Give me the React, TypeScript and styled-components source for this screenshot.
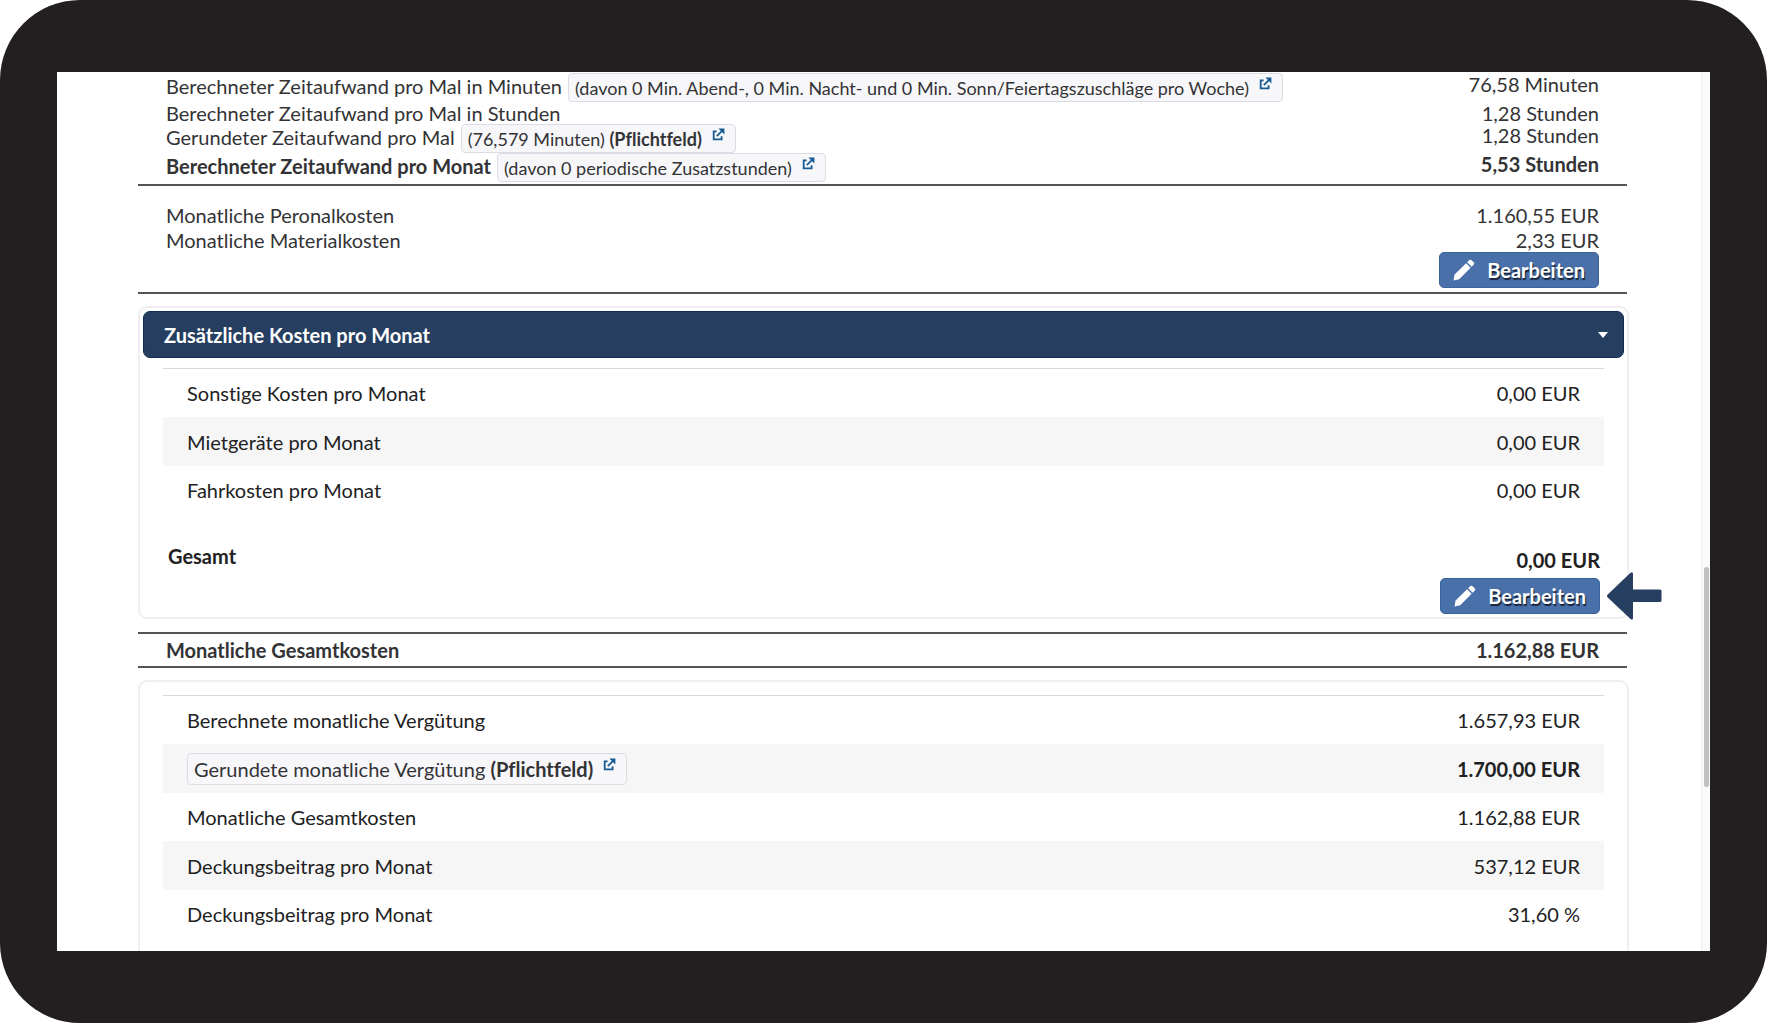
import React from "react";
import styled, { createGlobalStyle, css } from "styled-components";

const GlobalStyle = createGlobalStyle`
  *, *::before, *::after { box-sizing: border-box; }
  html, body, #root { height: 100%; }
  body { margin: 0; background: #ffffff; }
`;

const Device = styled.main`
  display: flex;
  height: 100%;
  padding: 72px 57px;
  border-radius: 80px;
  background: #231f20;
  font-family: Lato, "Noto Sans", sans-serif;
  font-size: 20px;
  font-variant-ligatures: none;
  line-height: 22px;
  color: #333335;
`;

const Screen = styled.div`
  flex: 1;
  display: flex;
  min-width: 0;
  overflow: hidden;
  background: #ffffff;
`;

const Content = styled.div`
  flex: 1;
  min-width: 0;
  padding: 1px 72px 0 81px;
`;

const ScrollTrack = styled.div`
  flex: none;
  width: 9px;
  padding: 0 1px 0 2px;
  border-left: 1px solid #eeeeee;
  background: #fafafa;
`;

const ScrollThumb = styled.div`
  height: 25%;
  margin-top: 495px;
  border-radius: 4px;
  background: #c1c1c1;
`;

const Section = styled.section<{ $top: number; $bottom: number; $ruled?: boolean }>`
  margin-right: 2px;
  padding: ${(p) => p.$top}px 28px ${(p) => p.$bottom}px;
  border-bottom: 2px solid #555557;
  ${(p) => p.$ruled && css`border-top: 2px solid #555557;`}
`;

const rowHeights = { compact: 22, normal: 25, noted: 29 };

const Label = styled.div`
  display: flex;
  align-items: flex-start;
  gap: 6px;
  white-space: nowrap;
`;

const Row = styled.div<{ $bold?: boolean; $size?: keyof typeof rowHeights }>`
  display: flex;
  justify-content: space-between;
  align-items: center;
  height: ${(p) => rowHeights[p.$size ?? "normal"]}px;
  font-weight: ${(p) => (p.$bold ? 700 : 400)};
  ${(p) =>
    p.$size === "noted" &&
    css`
      align-items: flex-start;
      ${Label} { line-height: 26px; }
    `}
`;

const Chip = styled.span<{ $large?: boolean }>`
  display: inline-flex;
  align-items: center;
  gap: 5px;
  height: ${(p) => (p.$large ? 32 : 29)}px;
  padding: 0 10px 0 6px;
  border: 1px solid #dcdce6;
  border-radius: 4px;
  background: #f7f7fa;
  font-size: ${(p) => (p.$large ? 20 : 18)}px;
  font-weight: 400;
  color: #333335;
  white-space: nowrap;
`;

const ChipLink = styled.a`
  display: flex;
  margin: 0 0 8px 5px;
  color: #175a94;
`;

const Actions = styled.div`
  position: relative;
  display: flex;
  justify-content: flex-end;
`;

const EditButton = styled.button`
  display: flex;
  align-items: center;
  gap: 12px;
  height: 36px;
  padding: 0 13px;
  border: 1px solid #3a64a0;
  border-radius: 5px;
  background: #4a70a9;
  color: #ffffff;
  font: inherit;
  font-weight: 700;
  text-shadow: 1px 2px 1px #14233a;
`;

const Pointer = styled.svg`
  position: absolute;
  left: 100%;
  top: -6px;
  margin-left: 7px;
`;

const Card = styled.section<{ $open?: boolean }>`
  margin-top: 12px;
  margin-bottom: 13px;
  padding: ${(p) => (p.$open ? 3 : 13)}px 3px 3px;
  border: 2px solid #efeff0;
  border-radius: 9px;
`;

const CardHeader = styled.button`
  display: flex;
  justify-content: space-between;
  align-items: center;
  width: 100%;
  height: 47px;
  margin-bottom: 10px;
  padding: 0 15px 0 20px;
  border: 1px solid #102b52;
  border-radius: 7px;
  background: #263e60;
  color: #ffffff;
  font: inherit;
  font-weight: 700;
`;

const TableWrap = styled.div`
  padding: 0 20px;
`;

const CostTable = styled.table`
  width: 100%;
  border-collapse: separate;
  border-spacing: 0;
  border-top: 1px solid #d8d8da;
  color: #212122;

  th, td { height: 48px; padding: 0 24px; }
  th { font-weight: 400; text-align: left; }
  td { text-align: right; }
  tr:nth-child(even) > * {
    height: 49px;
    background: #f6f6f7;
  }
`;

const Totals = styled.div`
  display: flex;
  justify-content: space-between;
  padding: 31px 24px 0 25px;
  font-weight: 700;
  color: #212122;
`;

const TotalAside = styled.div`
  display: flex;
  flex-direction: column;
  gap: 7px;
  padding-top: 4px;
  text-align: right;
`;

const ExternalIcon = () => (
  <svg width="13" height="13" viewBox="0 0 13 13" fill="none" stroke="currentColor" strokeWidth="1.8" aria-hidden="true">
    <path d="M4.6 3.4H1.7v7.9H9.6V8.2" />
    <path d="M4.8 8.2l5-5" />
    <path d="M6.4 0.4H12.4V6.4L10.4 4.6L8.4 2.4Z" fill="currentColor" stroke="none" />
  </svg>
);

const PencilIcon = () => (
  <svg width="22" height="22" viewBox="0 0 22 22" fill="#ffffff" aria-hidden="true">
    <path d="M0.5 21.5L1.6 15.6L13.1 4.3L17.6 8.8L6.2 20.3Z" />
    <path d="M14.2 3.2L16.3 1.1Q17.3 0.2 18.3 1.1L20.8 3.6Q21.7 4.6 20.8 5.6L18.7 7.7Z" />
  </svg>
);

const Edit = () => (
  <EditButton type="button">
    <PencilIcon />
    Bearbeiten
  </EditButton>
);

const Note = ({ children, large }: { children: React.ReactNode; large?: boolean }) => (
  <Chip $large={large}>
    <span>{children}</span>
    <ChipLink href="#" aria-label="Öffnen">
      <ExternalIcon />
    </ChipLink>
  </Chip>
);

type Entry = { label: React.ReactNode; value: React.ReactNode };

const extraCosts: Entry[] = [
  { label: "Sonstige Kosten pro Monat", value: "0,00 EUR" },
  { label: "Mietgeräte pro Monat", value: "0,00 EUR" },
  { label: "Fahrkosten pro Monat", value: "0,00 EUR" },
];

const results: Entry[] = [
  { label: "Berechnete monatliche Vergütung", value: "1.657,93 EUR" },
  {
    label: <Note large>Gerundete monatliche Vergütung <b>(Pflichtfeld)</b></Note>,
    value: <b>1.700,00 EUR</b>,
  },
  { label: "Monatliche Gesamtkosten", value: "1.162,88 EUR" },
  { label: "Deckungsbeitrag pro Monat", value: "537,12 EUR" },
  { label: "Deckungsbeitrag pro Monat", value: "31,60 %" },
];

const Entries = ({ rows }: { rows: Entry[] }) => (
  <TableWrap>
    <CostTable>
      <tbody>
        {rows.map((r, i) => (
          <tr key={i}>
            <th scope="row">{r.label}</th>
            <td>{r.value}</td>
          </tr>
        ))}
      </tbody>
    </CostTable>
  </TableWrap>
);

export default function App() {
  return (
    <>
      <GlobalStyle />
      <Device>
        <Screen>
          <Content>
            <Section $top={0} $bottom={2}>
              <Row $size="noted">
                <Label>
                  Berechneter Zeitaufwand pro Mal in Minuten
                  <Note>(davon 0 Min. Abend-, 0 Min. Nacht- und 0 Min. Sonn/Feiertagszuschläge pro Woche)</Note>
                </Label>
                <span>76,58 Minuten</span>
              </Row>
              <Row $size="compact">
                <Label>Berechneter Zeitaufwand pro Mal in Stunden</Label>
                <span>1,28 Stunden</span>
              </Row>
              <Row $size="noted">
                <Label>
                  Gerundeter Zeitaufwand pro Mal
                  <Note>(76,579 Minuten) <b>(Pflichtfeld)</b></Note>
                </Label>
                <span>1,28 Stunden</span>
              </Row>
              <Row $size="noted" $bold>
                <Label>
                  Berechneter Zeitaufwand pro Monat
                  <Note>(davon 0 periodische Zusatzstunden)</Note>
                </Label>
                <span>5,53 Stunden</span>
              </Row>
            </Section>
            <Section $top={16} $bottom={4}>
              <Row>
                <Label>Monatliche Peronalkosten</Label>
                <span>1.160,55 EUR</span>
              </Row>
              <Row>
                <Label>Monatliche Materialkosten</Label>
                <span>2,33 EUR</span>
              </Row>
              <Actions>
                <Edit />
              </Actions>
            </Section>
            <Card $open>
              <CardHeader type="button" aria-expanded="true">
                Zusätzliche Kosten pro Monat
                <svg width="10" height="6" viewBox="0 0 10 6" fill="#ffffff" aria-hidden="true">
                  <path d="M0 0H10L5 6Z" />
                </svg>
              </CardHeader>
              <Entries rows={extraCosts} />
              <Totals>
                <span>Gesamt</span>
                <TotalAside>
                  <span>0,00 EUR</span>
                  <Actions>
                    <Edit />
                    <Pointer width="55" height="48" viewBox="0 0 55 48" fill="#263e60" aria-hidden="true">
                      <path d="M0.5 22.8L23.5 0.8Q26 -0.5 26 2V17.5H53Q54.5 17.5 54.5 19V28.5Q54.5 30 53 30H26V46Q26 48.5 23.5 47L0.5 25.2Q-0.5 24 0.5 22.8Z" />
                    </Pointer>
                  </Actions>
                </TotalAside>
              </Totals>
            </Card>
            <Section $ruled $top={3} $bottom={4}>
              <Row $bold>
                <Label>Monatliche Gesamtkosten</Label>
                <span>1.162,88 EUR</span>
              </Row>
            </Section>
            <Card>
              <Entries rows={results} />
              <Totals />
            </Card>
          </Content>
          <ScrollTrack>
            <ScrollThumb />
          </ScrollTrack>
        </Screen>
      </Device>
    </>
  );
}
